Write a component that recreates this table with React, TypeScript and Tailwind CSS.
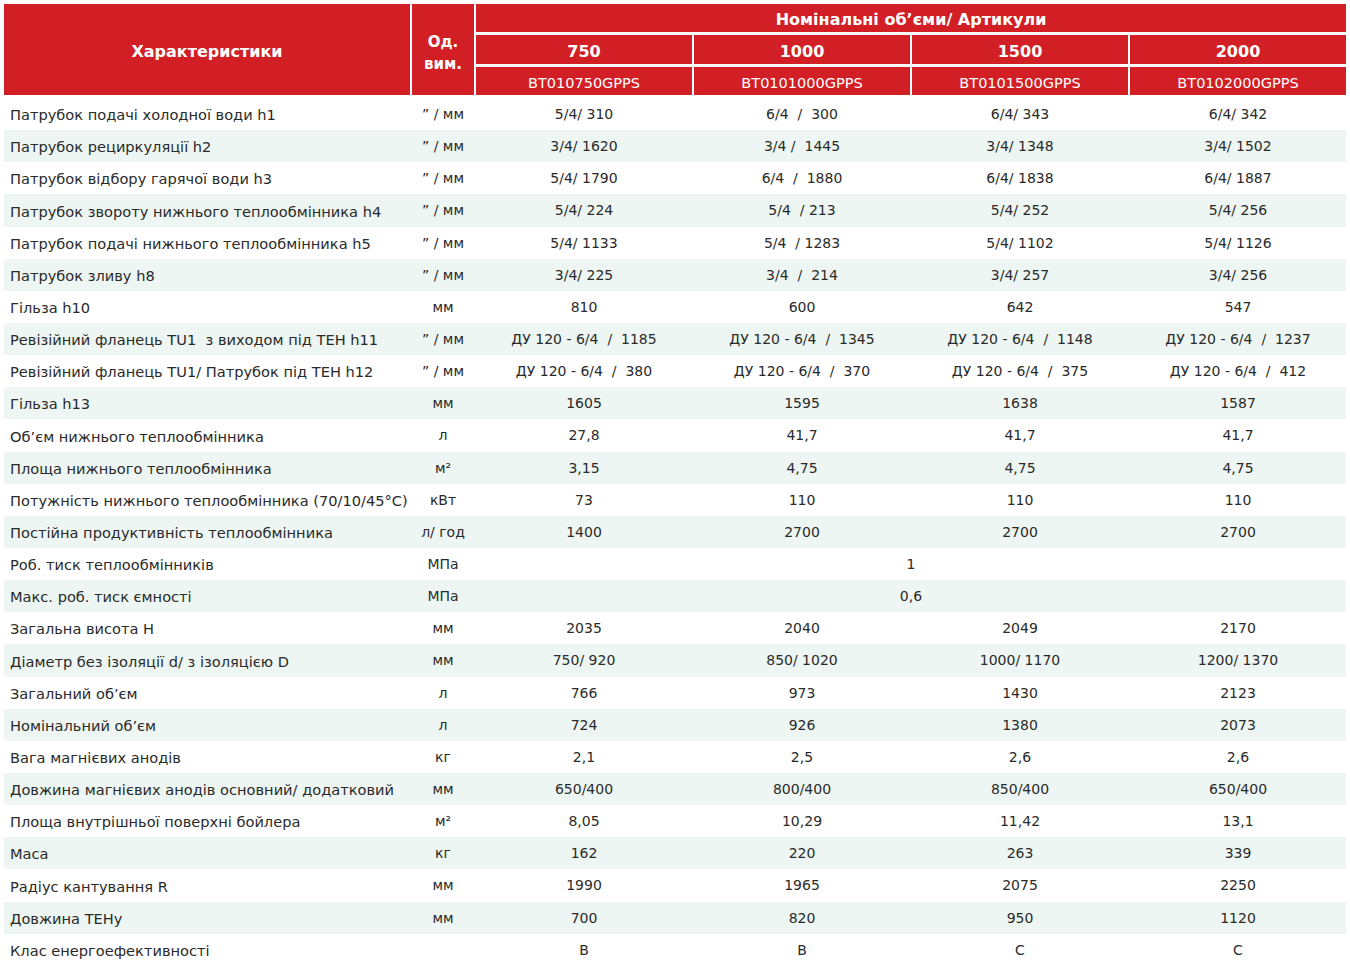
const cols = "grid grid-cols-[406px_62px_216px_216px_216px_216px] gap-x-[2px]";

type Row = { label: string; unit: string; values?: string[]; span?: string };

const rows: Row[] = [
  { label: "Патрубок подачі холодної води h1", unit: "” / мм", values: ["5/4/ 310", "6/4  /  300", "6/4/ 343", "6/4/ 342"] },
  { label: "Патрубок рециркуляції h2", unit: "” / мм", values: ["3/4/ 1620", "3/4 /  1445", "3/4/ 1348", "3/4/ 1502"] },
  { label: "Патрубок відбору гарячої води h3", unit: "” / мм", values: ["5/4/ 1790", "6/4  /  1880", "6/4/ 1838", "6/4/ 1887"] },
  { label: "Патрубок звороту нижнього теплообмінника h4", unit: "” / мм", values: ["5/4/ 224", "5/4  / 213", "5/4/ 252", "5/4/ 256"] },
  { label: "Патрубок подачі нижнього теплообмінника h5", unit: "” / мм", values: ["5/4/ 1133", "5/4  / 1283", "5/4/ 1102", "5/4/ 1126"] },
  { label: "Патрубок зливу h8", unit: "” / мм", values: ["3/4/ 225", "3/4  /  214", "3/4/ 257", "3/4/ 256"] },
  { label: "Гільза h10", unit: "мм", values: ["810", "600", "642", "547"] },
  { label: "Ревізійний фланець TU1  з виходом під ТЕН h11", unit: "” / мм", values: ["ДУ 120 - 6/4  /  1185", "ДУ 120 - 6/4  /  1345", "ДУ 120 - 6/4  /  1148", "ДУ 120 - 6/4  /  1237"] },
  { label: "Ревізійний фланець TU1/ Патрубок під ТЕН h12", unit: "” / мм", values: ["ДУ 120 - 6/4  /  380", "ДУ 120 - 6/4  /  370", "ДУ 120 - 6/4  /  375", "ДУ 120 - 6/4  /  412"] },
  { label: "Гільза h13", unit: "мм", values: ["1605", "1595", "1638", "1587"] },
  { label: "Об’єм нижнього теплообмінника", unit: "л", values: ["27,8", "41,7", "41,7", "41,7"] },
  { label: "Площа нижнього теплообмінника", unit: "м²", values: ["3,15", "4,75", "4,75", "4,75"] },
  { label: "Потужність нижнього теплообмінника (70/10/45°C)", unit: "кВт", values: ["73", "110", "110", "110"] },
  { label: "Постійна продуктивність теплообмінника", unit: "л/ год", values: ["1400", "2700", "2700", "2700"] },
  { label: "Роб. тиск теплообмінників", unit: "МПа", span: "1" },
  { label: "Макс. роб. тиск ємності", unit: "МПа", span: "0,6" },
  { label: "Загальна висота H", unit: "мм", values: ["2035", "2040", "2049", "2170"] },
  { label: "Діаметр без ізоляції d/ з ізоляцією D", unit: "мм", values: ["750/ 920", "850/ 1020", "1000/ 1170", "1200/ 1370"] },
  { label: "Загальний об’єм", unit: "л", values: ["766", "973", "1430", "2123"] },
  { label: "Номінальний об’єм", unit: "л", values: ["724", "926", "1380", "2073"] },
  { label: "Вага магнієвих анодів", unit: "кг", values: ["2,1", "2,5", "2,6", "2,6"] },
  { label: "Довжина магнієвих анодів основний/ додатковий", unit: "мм", values: ["650/400", "800/400", "850/400", "650/400"] },
  { label: "Площа внутрішньої поверхні бойлера", unit: "м²", values: ["8,05", "10,29", "11,42", "13,1"] },
  { label: "Маса", unit: "кг", values: ["162", "220", "263", "339"] },
  { label: "Радіус кантування R", unit: "мм", values: ["1990", "1965", "2075", "2250"] },
  { label: "Довжина ТЕНу", unit: "мм", values: ["700", "820", "950", "1120"] },
  { label: "Клас енергоефективності", unit: "", values: ["B", "B", "C", "C"] },
];

const models = [
  { vol: "750", code: "BT010750GPPS" },
  { vol: "1000", code: "BT0101000GPPS" },
  { vol: "1500", code: "BT0101500GPPS" },
  { vol: "2000", code: "BT0102000GPPS" },
];

export default function App() {
  return (
    <div className="w-[1350px] h-[962px] bg-white pt-[4px] pl-[4px] font-['DejaVu_Sans',sans-serif] text-[#2a2a2a] overflow-hidden">
      <div className="w-[1342px]">
        {/* header */}
        <div className={`${cols} gap-y-[3px] grid-rows-[28px_29px_28px] text-white`}>
          <div className="row-span-3 bg-[#d21f26] flex items-center justify-center pt-[5px] text-[16px] font-bold">
            Характеристики
          </div>
          <div className="row-span-3 bg-[#d21f26] flex items-center justify-center text-center pt-[6px] text-[15px] font-bold leading-[22px]">
            Од.
            <br />
            вим.
          </div>
          <div className="col-span-4 bg-[#d21f26] flex items-center justify-center pt-[4px] text-[16px] font-bold">
            Номінальні об’єми/ Артикули
          </div>
          {models.map((m) => (
            <div key={m.vol} className="bg-[#d21f26] flex items-center justify-center pt-[5px] text-[16px] font-bold">
              {m.vol}
            </div>
          ))}
          {models.map((m) => (
            <div key={m.code} className="bg-[#d21f26] flex items-center justify-center pt-[5px] text-[14.5px]">
              {m.code}
            </div>
          ))}
        </div>

        {/* body */}
        <div className="mt-[3px] text-[14px]">
          {rows.map((r, i) => (
            <div key={r.label} className={`${cols} h-[32.15px] items-center pt-[1px] ${i % 2 === 1 ? "bg-[#edf6f2]" : "bg-white"}`}>
              <div className="pl-[6px] pt-[1px] whitespace-pre text-[14.6px]">{r.label}</div>
              <div className="text-center whitespace-nowrap">{r.unit}</div>
              {r.span ? (
                <div className="col-span-4 text-center">{r.span}</div>
              ) : (
                r.values!.map((v, j) => (
                  <div key={j} className="text-center whitespace-pre">
                    {v}
                  </div>
                ))
              )}
            </div>
          ))}
        </div>
      </div>
    </div>
  );
}
